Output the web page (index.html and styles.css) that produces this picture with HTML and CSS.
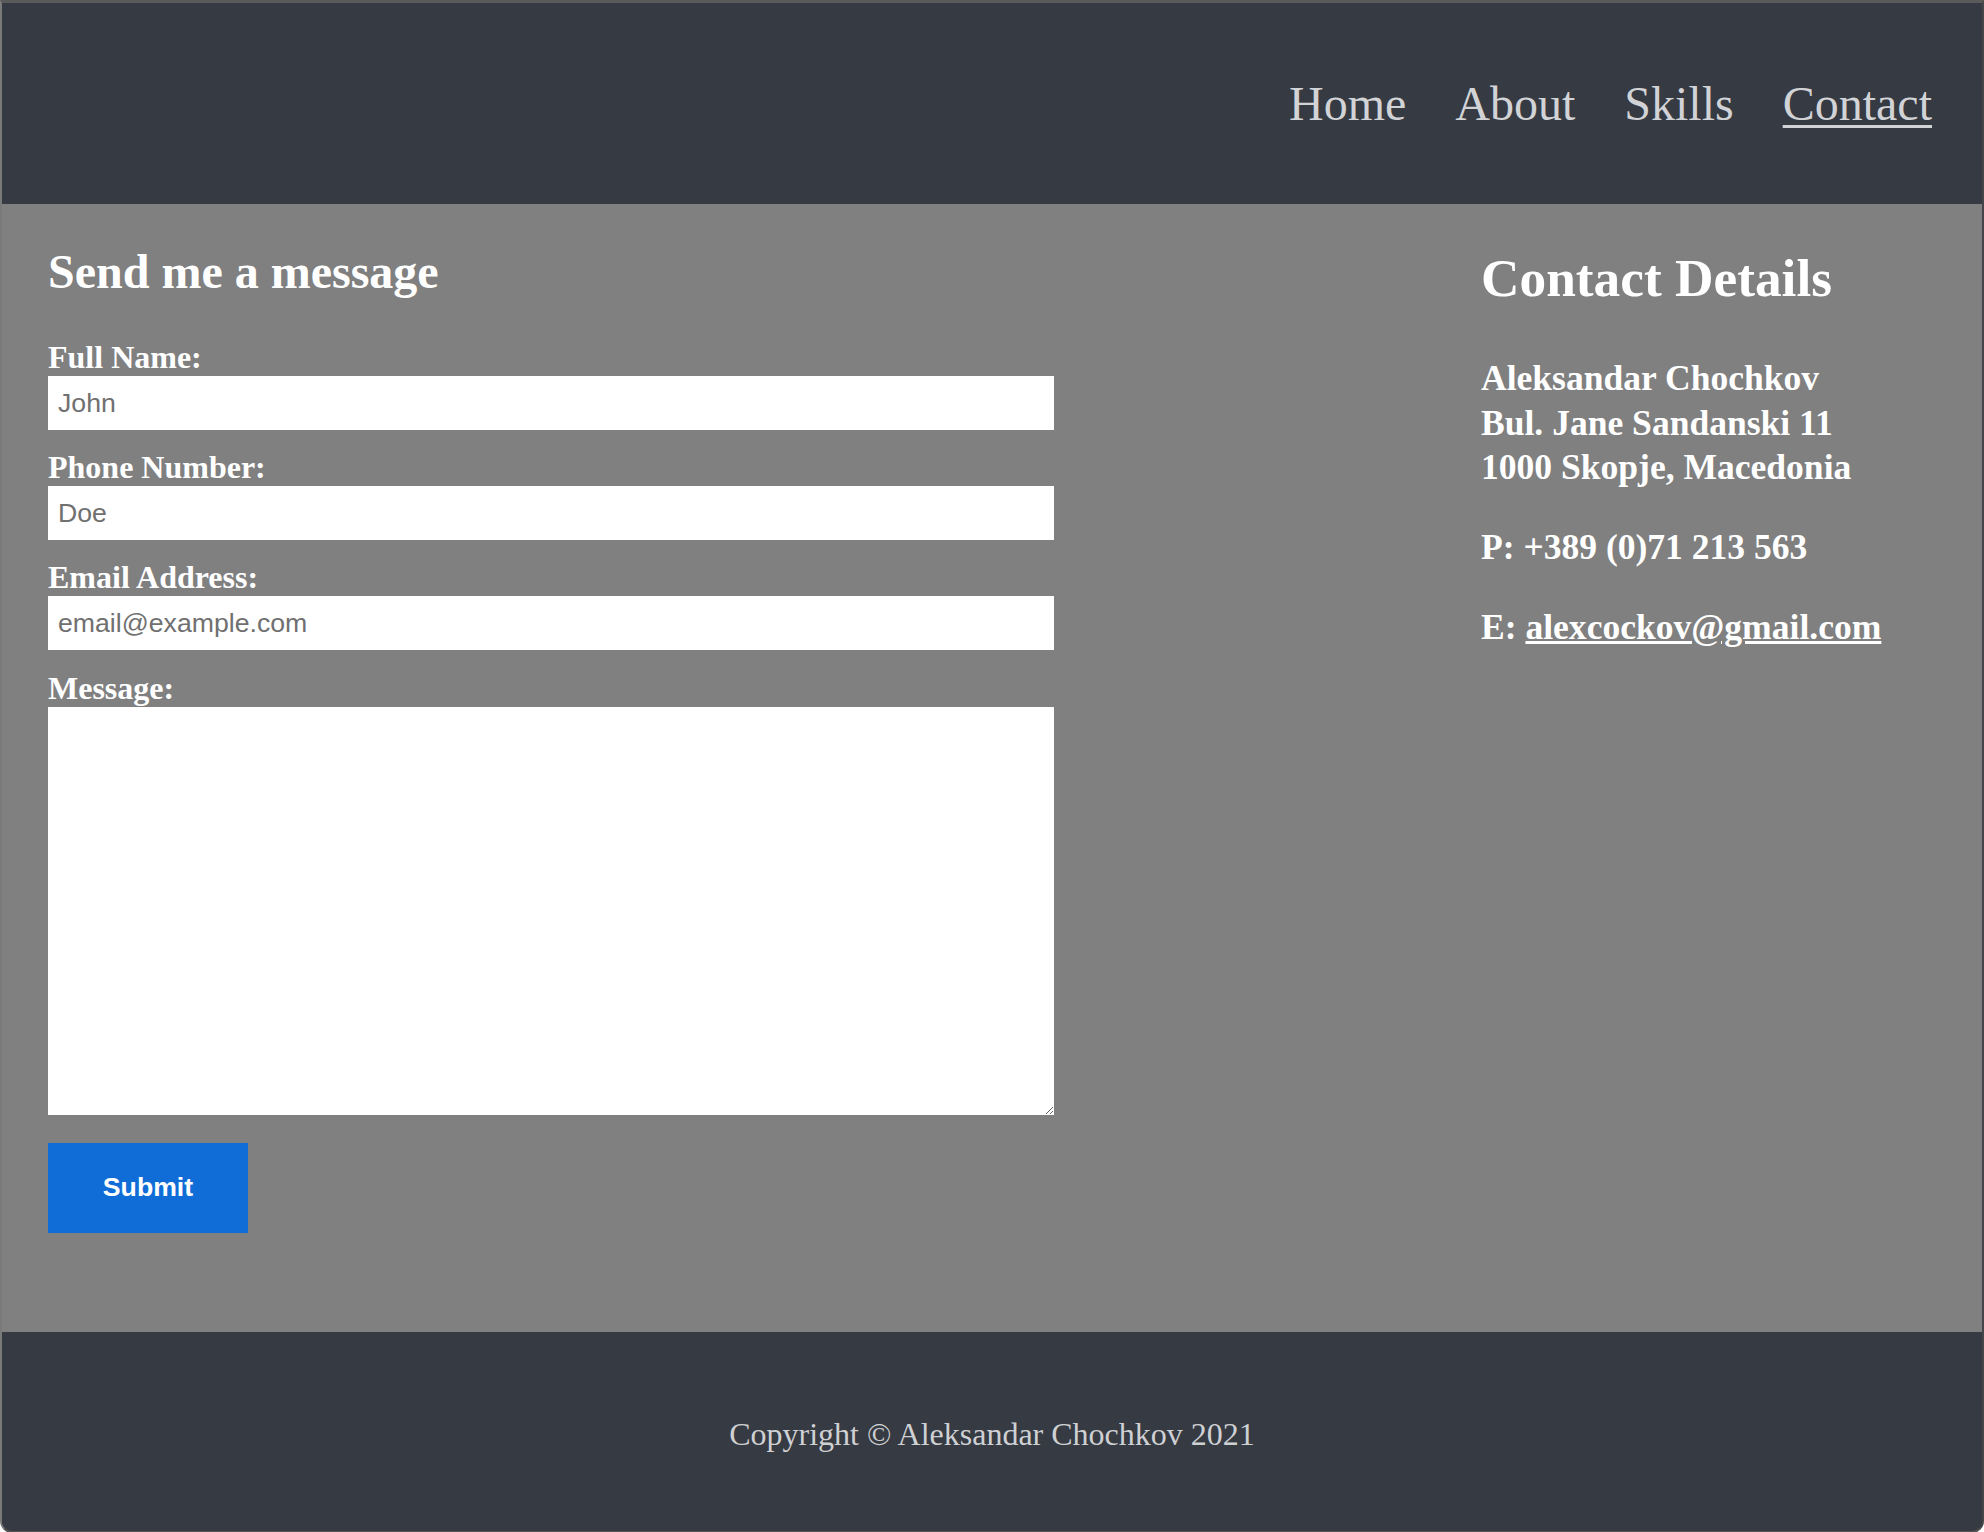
FILE: index.html
```html
<!DOCTYPE html>
<html lang="en">
<head>
<meta charset="utf-8">
<title>Contact</title>
<link rel="stylesheet" href="styles.css">
</head>
<body>
<div class="window">
  <header class="site-header">
    <nav class="nav">
      <a href="#" class="nav-link">Home</a>
      <a href="#" class="nav-link">About</a>
      <a href="#" class="nav-link">Skills</a>
      <a href="#" class="nav-link active">Contact</a>
    </nav>
  </header>
  <main class="content">
    <section class="form-col">
      <h2 class="form-title">Send me a message</h2>
      <form class="form" onsubmit="return false;">
        <label class="field-label" for="name">Full Name:</label>
        <input class="field" id="name" type="text" placeholder="John">
        <label class="field-label" for="phone">Phone Number:</label>
        <input class="field" id="phone" type="text" placeholder="Doe">
        <label class="field-label" for="email">Email Address:</label>
        <input class="field" id="email" type="text" placeholder="email@example.com">
        <label class="field-label" for="msg">Message:</label>
        <textarea class="area" id="msg"></textarea>
        <button class="submit" type="submit">Submit</button>
      </form>
    </section>
    <section class="details">
      <h2 class="details-title">Contact Details</h2>
      <p class="details-p">Aleksandar Chochkov<br>Bul. Jane Sandanski 11<br>1000 Skopje, Macedonia</p>
      <p class="details-p">P: +389 (0)71 213 563</p>
      <p class="details-p">E: <a href="#" class="mail">alexcockov@gmail.com</a></p>
    </section>
  </main>
  <footer class="site-footer">
    <p class="copy">Copyright © Aleksandar Chochkov 2021</p>
  </footer>
</div>
</body>
</html>
```
FILE: styles.css
```css
html, body {
  margin: 0;
  padding: 0;
  background: #ffffff;
}

body {
  font-family: "Liberation Serif", "Times New Roman", serif;
}

.window {
  border-style: solid;
  border-color: #5a5a5a #444649 #555555 #7a7a7a;
  border-width: 3px 2px 2px 2px;
  border-radius: 0 0 12px 12px;
  overflow: hidden;
  background: #363a42;
}

.site-header {
  height: 201px;
  background: #363a42;
  display: flex;
  align-items: center;
  justify-content: flex-end;
  padding-right: 50px;
}

.nav {
  display: flex;
  gap: 49px;
}

.nav-link {
  font-size: 48px;
  color: #d2d3d6;
  text-decoration: none;
}

.nav-link.active {
  text-decoration: underline;
  text-underline-offset: 5px;
  text-decoration-thickness: 3px;
}

.content {
  background: #808080;
  display: flex;
  justify-content: space-between;
  align-items: flex-start;
  padding: 0 48px 99px 46px;
  color: #ffffff;
}

.form-col {
  width: 1006px;
}

.form-title {
  font-size: 48px;
  font-weight: bold;
  margin: 40px 0 40px 0;
}

.form {
  display: flex;
  flex-direction: column;
  align-items: flex-start;
}

.field-label {
  display: block;
  font-size: 32px;
  font-weight: bold;
}

.field {
  box-sizing: border-box;
  width: 1006px;
  height: 54px;
  border: none;
  outline: none;
  margin: 0 0 19.2px 0;
  padding: 0 10px;
  font-family: "Liberation Sans", Arial, sans-serif;
  font-size: 26.67px;
  color: #555;
  background: #ffffff;
}

.field::placeholder {
  color: #707070;
  opacity: 1;
}

.area {
  display: block;
  box-sizing: border-box;
  width: 1006px;
  height: 408px;
  border: none;
  outline: none;
  margin: 0;
  padding: 8px 10px;
  font-family: "Liberation Sans", Arial, sans-serif;
  font-size: 26.67px;
  background: #ffffff;
}

.submit {
  margin-top: 28px;
  width: 200px;
  height: 90px;
  border: none;
  background: #106dd7;
  color: #ffffff;
  font-family: "Liberation Sans", Arial, sans-serif;
  font-weight: bold;
  font-size: 26.67px;
  padding: 0;
}

.details {
  width: 453px;
}

.details-title {
  font-size: 53.33px;
  font-weight: bold;
  margin: 43.4px 0 46.8px 0;
}

.details-p {
  font-size: 35.56px;
  font-weight: bold;
  line-height: 44.4px;
  margin: 35.56px 0;
}

.mail {
  color: #ffffff;
  text-decoration: underline;
}

.site-footer {
  box-sizing: border-box;
  height: 199px;
  padding-top: 7px;
  background: #363a42;
  display: flex;
  align-items: center;
  justify-content: center;
}

.copy {
  margin: 0;
  font-size: 32px;
  color: #cfd0d3;
}
```
